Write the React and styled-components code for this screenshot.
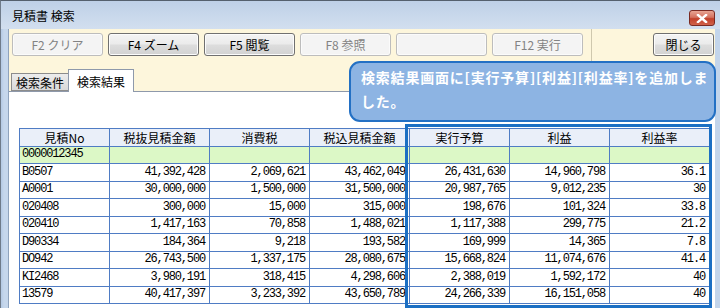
import styled, { createGlobalStyle } from "styled-components";

const GlobalStyle = createGlobalStyle`
  html, body {
    margin: 0;
    padding: 0;
    background: #c3d5eb;
  }
  * {
    box-sizing: border-box;
  }
`;

const rows = [
  ["B0507", "41,392,428", "2,069,621", "43,462,049", "26,431,630", "14,960,798", "36.1"],
  ["A0001", "30,000,000", "1,500,000", "31,500,000", "20,987,765", "9,012,235", "30"],
  ["020408", "300,000", "15,000", "315,000", "198,676", "101,324", "33.8"],
  ["020410", "1,417,163", "70,858", "1,488,021", "1,117,388", "299,775", "21.2"],
  ["D90334", "184,364", "9,218", "193,582", "169,999", "14,365", "7.8"],
  ["DO942", "26,743,500", "1,337,175", "28,080,675", "15,668,824", "11,074,676", "41.4"],
  ["KI2468", "3,980,191", "318,415", "4,298,606", "2,388,019", "1,592,172", "40"],
  ["13579", "40,417,397", "3,233,392", "43,650,789", "24,266,339", "16,151,058", "40"],
];

const headers = ["見積No", "税抜見積金額", "消費税", "税込見積金額", "実行予算", "利益", "利益率"];

const buttons = [
  { label: "F2 クリア", enabled: false },
  { label: "F4 ズーム", enabled: true },
  { label: "F5 閲覧", enabled: true },
  { label: "F8 参照", enabled: false },
  { label: "", enabled: false },
  { label: "F12 実行", enabled: false },
];

export default function App() {
  return (
    <Window>
      <GlobalStyle />
      <TitleBar>
        <Title>見積書 検索</Title>
        <CloseButton>
          <svg width="12" height="9" viewBox="0 0 12 9">
            <path
              d="M2 1 L10 8 M10 1 L2 8"
              stroke="#ffffff"
              strokeWidth="2.4"
              strokeLinecap="square"
            />
          </svg>
        </CloseButton>
      </TitleBar>
      <Client>
        <Toolbar>
          {buttons.map((b, i) => (
            <ToolButton key={i} $enabled={b.enabled}>
              {b.label}
            </ToolButton>
          ))}
          <Separator />
          <CloseAction $enabled>閉じる</CloseAction>
        </Toolbar>
        <TabStrip>
          <Tab>検索条件</Tab>
          <Tab $active>検索結果</Tab>
        </TabStrip>
        <Panel>
          <Grid>
            <colgroup>
              <col style={{ width: 90 }} />
              {headers.slice(1).map((h) => (
                <col key={h} style={{ width: 100 }} />
              ))}
            </colgroup>
            <thead>
              <tr>
                {headers.map((h) => (
                  <HeadCell key={h}>{h}</HeadCell>
                ))}
              </tr>
            </thead>
            <tbody>
              <Row $green>
                <Cell>0000012345</Cell>
                {headers.slice(1).map((h) => (
                  <Cell key={h} />
                ))}
              </Row>
              {rows.map((r) => (
                <Row key={r[0]}>
                  {r.map((v, i) => (
                    <Cell key={i} $num={i > 0}>
                      {v}
                    </Cell>
                  ))}
                </Row>
              ))}
            </tbody>
          </Grid>
        </Panel>
      </Client>
      <Highlight />
      <Callout>検索結果画面に[実行予算][利益][利益率]を追加しました。</Callout>
    </Window>
  );
}

const Window = styled.div`
  position: relative;
  width: 720px;
  height: 308px;
  overflow: hidden;
  display: flex;
  flex-direction: column;
  background: linear-gradient(90deg, #b4c9e4 0px, #c6d7ec 3px, #c3d5eb 100%);
  border-top: 1px solid #55606e;
  border-left: 1px solid #6f7b8a;
  font-family: "Noto Sans CJK JP", "Noto Sans", sans-serif;
`;

const TitleBar = styled.div`
  height: 28px;
  display: flex;
  align-items: flex-start;
  background: linear-gradient(#bed0e7, #d2dfef);
`;

const Title = styled.div`
  margin: 6px 0 0 11px;
  font-size: 12px;
  line-height: 17px;
  color: #000;
`;

const CloseButton = styled.div`
  margin: 9px 5px 0 auto;
  width: 26px;
  height: 16px;
  display: flex;
  align-items: center;
  justify-content: center;
  border: 1px solid #7a2a22;
  border-radius: 3px;
  background: linear-gradient(#e8a493 0%, #d47260 45%, #c2402a 55%, #d0624a 100%);
`;

const Client = styled.div`
  flex: 1;
  margin: 0 5px 0 7px;
  display: flex;
  flex-direction: column;
  background: #fdf6dc;
  border-left: 1px solid #8fa3bd;
  min-height: 0;
`;

const Toolbar = styled.div`
  height: 32px;
  display: flex;
  align-items: flex-start;
  gap: 5px;
  padding: 4px 1px 0 3px;
`;

const ToolButton = styled.div`
  width: 91px;
  height: 23px;
  flex: none;
  display: flex;
  align-items: center;
  justify-content: center;
  font-size: 12px;
  border-radius: 3px;
  border: 1px solid ${(p) => (p.$enabled ? "#707070" : "#bdbdbd")};
  color: ${(p) => (p.$enabled ? "#000" : "#838383")};
  background: ${(p) =>
    p.$enabled
      ? "linear-gradient(#f4f4f4 0%, #ebebeb 48%, #dddddd 52%, #d2d2d2 100%)"
      : "#f4f4f4"};
  box-shadow: inset 0 0 0 1px ${(p) => (p.$enabled ? "#fcfcfc" : "#fbfbfb")};
`;

const CloseAction = styled(ToolButton)`
  width: 61px;
  margin-left: auto;
`;

const Separator = styled.div`
  width: 1px;
  align-self: stretch;
  margin: -4px 0 0 3px;
  background: #cfc8ae;
`;

const TabStrip = styled.div`
  height: 30px;
  display: flex;
  align-items: flex-end;
  padding-left: 2px;
  position: relative;
  z-index: 1;
`;

const Tab = styled.div`
  height: ${(p) => (p.$active ? "23px" : "18px")};
  margin-bottom: ${(p) => (p.$active ? "-1px" : "0")};
  padding: 0 ${(p) => (p.$active ? "8px" : "4px")};
  display: flex;
  align-items: center;
  font-size: 12px;
  color: #000;
  border: 1px solid ${(p) => (p.$active ? "#8e99ab" : "#8c8c8c")};
  border-bottom: ${(p) => (p.$active ? "none" : "1px solid #8c8c8c")};
  background: ${(p) => (p.$active ? "#ffffff" : "linear-gradient(#ececec, #d9d9d9)")};
  & + & {
    margin-left: -1px;
  }
`;

const Panel = styled.div`
  flex: 1;
  min-height: 0;
  background: #ffffff;
  border-top: 1px solid #8e99ab;
  padding: 36px 0 0 10px;
  overflow: hidden;
`;

const Grid = styled.table`
  border-collapse: collapse;
  table-layout: fixed;
  width: 690px;
  font-size: 12px;
`;

const HeadCell = styled.th`
  height: 17.5px;
  padding: 0;
  font-weight: normal;
  text-align: center;
  background: #eaeff9;
  border: 1px solid #4f7cc4;
  line-height: 15px;
  white-space: nowrap;
  overflow: hidden;
`;

const Row = styled.tr`
  height: 17.5px;
  background: ${(p) => (p.$green ? "#dcf8c6" : "#ffffff")};
`;

const Cell = styled.td`
  padding: ${(p) => (p.$num ? "0 4px 0 0" : "0 0 0 2px")};
  border: 1px solid #4f7cc4;
  text-align: ${(p) => (p.$num ? "right" : "left")};
  font-family: "Liberation Mono", "DejaVu Sans Mono", monospace;
  font-size: 12px;
  letter-spacing: -1.15px;
  line-height: 15px;
  white-space: nowrap;
  overflow: hidden;
  color: #000;
`;

const Highlight = styled.div`
  position: absolute;
  left: 404px;
  top: 123px;
  width: 307px;
  height: 184px;
  border: 3px solid #1b6fc3;
  pointer-events: none;
`;

const Callout = styled.div`
  position: absolute;
  left: 348px;
  top: 60px;
  width: 367px;
  height: 61px;
  padding: 2px 3px 0 10px;
  border: 2px solid #2370c4;
  border-radius: 11px;
  background: #8db4e3;
  color: #ffffff;
  font-size: 14px;
  font-weight: bold;
  letter-spacing: 0.8px;
  line-height: 24px;
  z-index: 2;
`;
